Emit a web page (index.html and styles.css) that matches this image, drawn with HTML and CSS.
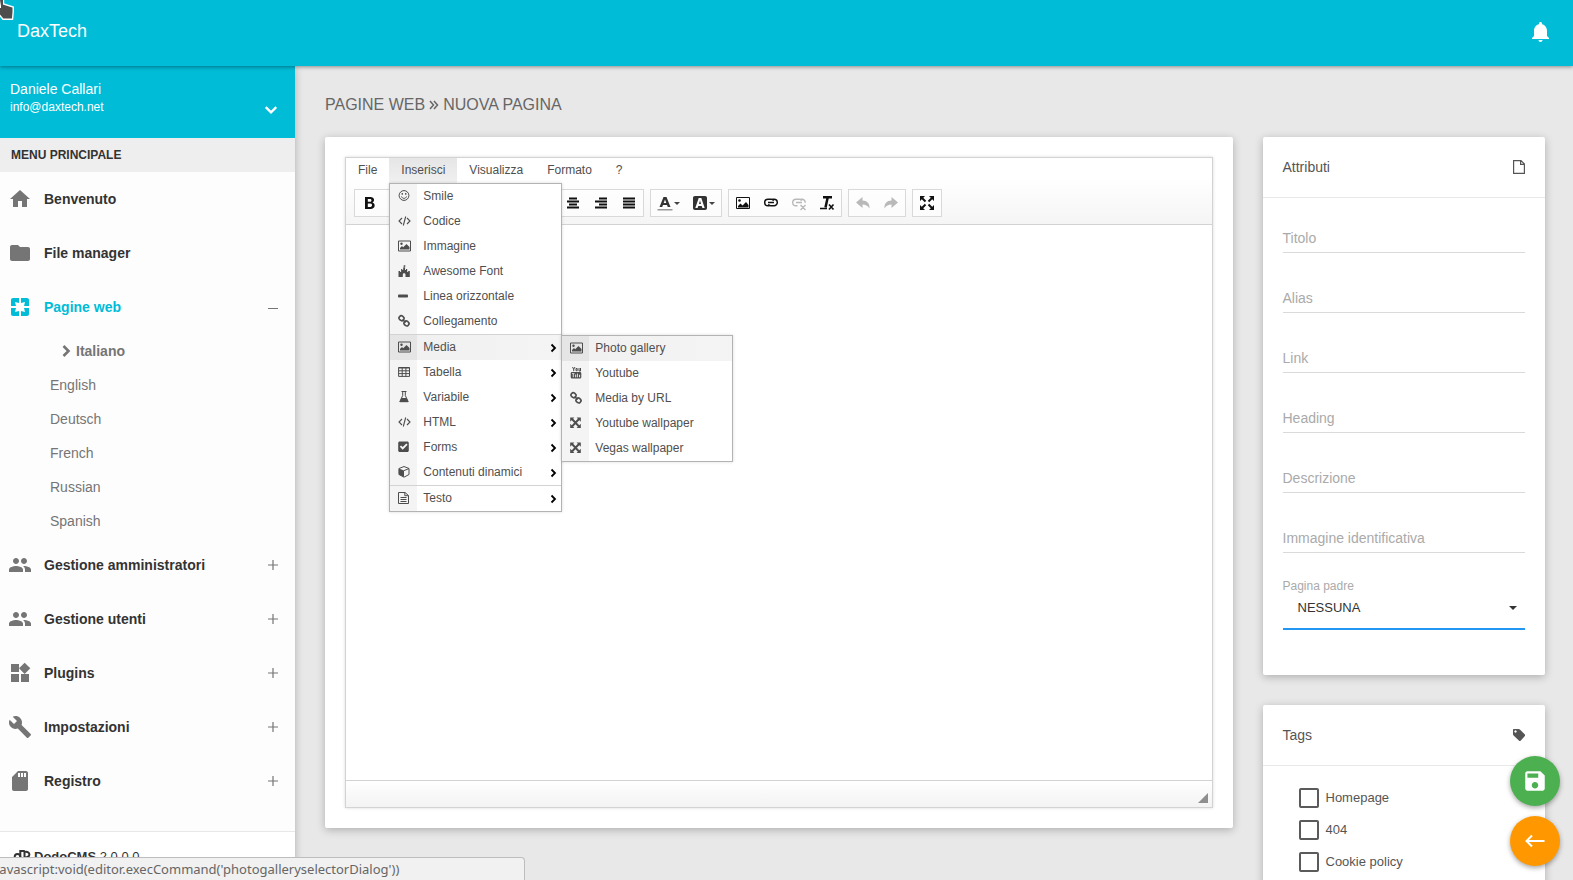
FILE: index.html
```html
<!DOCTYPE html>
<html lang="it">
<head>
<meta charset="utf-8">
<title>DaxTech</title>
<meta name="viewport" content="width=device-width, initial-scale=1">
<link rel="stylesheet" href="styles.css">
</head>
<body>
<svg class="sprite" aria-hidden="true">
  <symbol id="i-home" viewBox="0 0 24 24"><path d="M10 20v-6h4v6h5v-8h3L12 3 2 12h3v8z"/></symbol>
  <symbol id="i-folder" viewBox="0 0 24 24"><path d="M10 4H4c-1.1 0-2 .9-2 2v12c0 1.100.9 2 2 2h16c1.100 0 2-.9 2-2V8c0-1.100-.9-2-2-2h-8l-2-2z"/></symbol>
  <symbol id="i-pages" viewBox="0 0 24 24"><path d="M3 5v6h5L7 7l4 1V3H5c-1.100 0-2 .9-2 2zm5 8H3v6c0 1.100.9 2 2 2h6v-5l-4 1 1-4zm9 4l-4-1v5h6c1.100 0 2-.9 2-2v-6h-5l1 4zm2-14h-6v5l4-1-1 4h5V5c0-1.100-.9-2-2-2z"/></symbol>
  <symbol id="i-group" viewBox="0 0 24 24"><path d="M16 11c1.660 0 3-1.340 3-3s-1.340-3-3-3-3 1.340-3 3 1.340 3 3 3zm-8 0c1.660 0 3-1.340 3-3s-1.340-3-3-3-3 1.340-3 3 1.340 3 3 3zm0 2c-2.330 0-7 1.170-7 3.500V19h14v-2.500c0-2.330-4.670-3.500-7-3.500zm8 0c-.29 0-.62.020-.97.050 1.160.84 1.970 1.970 1.970 3.450V19h6v-2.500c0-2.330-4.670-3.500-7-3.500z"/></symbol>
  <symbol id="i-widgets" viewBox="0 0 24 24"><path d="M13 13v8h8v-8h-8zM3 21h8v-8H3v8zM3 3v8h8V3H3zm13.660-1.310L11 7.340 16.660 13l5.660-5.660-5.660-5.650z"/></symbol>
  <symbol id="i-build" viewBox="0 0 24 24"><path d="M22.700 19l-9.100-9.100c.9-2.300.4-5-1.500-6.900-2-2-5-2.400-7.400-1.300L9 6 6 9 1.600 4.700C.4 7.100.9 10.100 2.900 12.100c1.900 1.900 4.600 2.400 6.900 1.500l9.100 9.100c.4.4 1 .4 1.400 0l2.300-2.300c.5-.4.5-1.100.1-1.400z"/></symbol>
  <symbol id="i-sd" viewBox="0 0 24 24"><path d="M18 2h-8L4 8v12c0 1.100.9 2 2 2h12c1.100 0 2-.9 2-2V4c0-1.100-.9-2-2-2zm-6 6h-2V4h2v4zm3 0h-2V4h2v4zm3 0h-2V4h2v4z"/></symbol>
  <symbol id="i-bell" viewBox="0 0 24 24"><path d="M11.500 22c1.100 0 2-.9 2-2h-4c0 1.100.9 2 2 2zm6.500-6v-5.500c0-3.070-2.130-5.640-5-6.320V3.500c0-.83-.67-1.500-1.500-1.500S10 2.670 10 3.500v.68c-2.870.68-5 3.250-5 6.320V16l-2 2v1h17v-1l-2-2z"/></symbol>
  <symbol id="i-save" viewBox="0 0 24 24"><path d="M17 3H5c-1.110 0-2 .9-2 2v14c0 1.100.89 2 2 2h14c1.100 0 2-.9 2-2V7l-4-4zm-5 16c-1.660 0-3-1.340-3-3s1.340-3 3-3 3 1.340 3 3-1.340 3-3 3zm3-10H5V5h10v4z"/></symbol>
  <symbol id="i-back" viewBox="0 0 20 20"><path d="M19.500 10H2M7 4.500L1.500 10 7 15.500" fill="none" stroke="currentColor" stroke-width="2"/></symbol>
  <symbol id="i-plus" viewBox="0 0 10 10"><path d="M0 5h10M5 0v10" fill="none" stroke="currentColor" stroke-width="1.200"/></symbol>
  <symbol id="i-minus" viewBox="0 0 10 10"><path d="M0 6.500h10" fill="none" stroke="currentColor"/></symbol>
  <symbol id="i-down" viewBox="0 0 12 12"><path d="M1.500 3.500L6 8l4.500-4.500" fill="none" stroke="currentColor" stroke-width="2"/></symbol>
  <symbol id="i-right" viewBox="0 0 12 12"><path d="M3.500 1L8.500 6l-5 5" fill="none" stroke="currentColor" stroke-width="2.600"/></symbol>
  <symbol id="i-more" viewBox="0 0 10 10"><path d="M3.500 1.500L7 5 3.500 8.500" fill="none" stroke="currentColor" stroke-width="1.800"/></symbol>
  <symbol id="i-double" viewBox="0 0 10 10"><path d="M1 1l3.500 4L1 9M5 1l3.500 4L5 9" fill="none" stroke="currentColor" stroke-width="1.500"/></symbol>
  <symbol id="i-logo" viewBox="0 0 18 18"><g fill="none" stroke="currentColor" stroke-width="2"><circle cx="4.500" cy="9.800" r="2.800"/><path d="M7.300 14V4h4.500M11.500 4v12M11.500 5c6.500-1.500 6.500 6 0 5.500"/></g></symbol>
  <symbol id="i-page" viewBox="0 0 12 14"><path d="M.6.6h7.400L11.400 4v9.400H.6zM7.600.6v3.700h3.800" fill="none" stroke="currentColor" stroke-width="1.200"/></symbol>
  <symbol id="i-tag" viewBox="1 1 12 12"><path fill-rule="evenodd" d="M1 2c0-.6.4-1 1-1h4.500c.5 0 1 .3 1.400.6l5 5c.5.500.5 1 0 1.500L8.600 12.700c-.4.4-1 .4-1.500 0L1.600 7.600C1.200 7.200 1 6.800 1 6.200zM3.500 2.300a1.200 1.200 0 1 0 .01 0z"/></symbol>

  <symbol id="m-smile" viewBox="0 0 14 14"><circle cx="6" cy="6.500" r="4.900" fill="none" stroke="currentColor"/><path d="M3.500 7.500c.8 2.500 4.200 2.500 5 0" fill="none" stroke="currentColor"/><path d="M3.600 4h1.300v1.800H3.600zM7.100 4h1.300v1.800H7.100z"/></symbol>
  <symbol id="m-code" viewBox="0 0 14 14"><path d="M4 4L1 7l3 3M9 4l3 3-3 3M7.700 2.500l-2.400 9" fill="none" stroke="currentColor" stroke-width="1.100"/></symbol>
  <symbol id="m-image" viewBox="0 0 14 14"><path d="M.5 2h12v10H.5z" fill="none" stroke="currentColor"/><circle cx="3.500" cy="4.800" r="1.200"/><path d="M2 10.500V9l2-2 1.200 1.200L8.500 5 11.500 8v2.500z"/></symbol>
  <symbol id="m-castle" viewBox="0 0 14 14"><path d="M.5 13V7h1.600v1h1V5h1.200v1h.9V3.500h.5V1.300h1.600v1.500H6.500v.7h.6V6H8V5h1.200v3h1V7h1.600v6H7.500v-2.500c0-1.600-2.700-1.600-2.700 0V13z"/></symbol>
  <symbol id="m-line" viewBox="0 0 14 14"><rect x="0" y="5.500" width="10" height="3" rx=".8"/></symbol>
  <symbol id="m-link" viewBox="0 0 14 14"><g fill="none" stroke="currentColor" stroke-width="1.600"><rect x="1" y="2" width="5" height="4.400" rx="2" transform="rotate(40 3.500 4.200)"/><rect x="6" y="7.200" width="5" height="4.400" rx="2" transform="rotate(40 8.500 9.400)"/><path d="M4.500 5.500l3.200 3"/></g></symbol>
  <symbol id="m-table" viewBox="0 0 14 14"><path d="M.6 2.500h10.900v8.900H.6zM.6 3h11M.6 5.800h11M.6 8.600h11M4.200 2v9.500M7.900 2v9.500" fill="none" stroke="currentColor"/></symbol>
  <symbol id="m-flask" viewBox="0 0 14 14"><path d="M3.500 1.500h5M4.700 1.500v4L1.800 11.700h8.400L7.300 5.500v-4" fill="none" stroke="currentColor"/><path d="M3.400 8h5.200l1.800 4H1.600z"/></symbol>
  <symbol id="m-check" viewBox="0 0 14 14"><path fill-rule="evenodd" d="M1.700 1.500h7.600c.9 0 1.500.6 1.500 1.500v7.500c0 .9-.6 1.500-1.500 1.500H1.700C.8 12 .2 11.400.2 10.500V3c0-.9.6-1.500 1.500-1.500zM1.800 6.800L4.700 9.700l4.900-4.900-1.300-1.300-3.600 3.600L3.100 5.500z"/></symbol>
  <symbol id="m-cube" viewBox="0 0 14 14"><path d="M6 1.500l5 2v6l-5 2.700-5-2.700v-6z" fill="none" stroke="currentColor"/><path d="M.8 3.500L6 5.600V12L.8 9.500z"/><path d="M6 5.600l5-2" stroke="currentColor"/></symbol>
  <symbol id="m-text" viewBox="0 0 14 14"><path d="M.5 1.500H7l3.500 3v8H.5zM6.800 1.500v3.200h3.500M2.500 6.500h6M2.500 8.500h6M2.500 10.500h6" fill="none" stroke="currentColor"/></symbol>
  <symbol id="m-youtube" viewBox="0 0 14 14"><path fill="none" stroke="currentColor" d="M2.500 1l1.200 2.200L5 1M3.700 3v2.200M6 2.500v2.200h1.200V2.500zM9 2v3h1.500V2"/><path fill-rule="evenodd" d="M2 6h8c.8 0 1.300.6 1.300 1.300V11c0 .8-.5 1.500-1.300 1.500H2C1.200 12.500.7 11.800.7 11V7.300C.7 6.600 1.200 6 2 6zm0 1.200v.9h.8v3.200h.9V8.100h.8v-.9zm3.200 1.400v2.700h1V8.600zm1.900-1.200v3.900h.8V7.400zm2 1.300v2.500h1V8.700z"/></symbol>
  <symbol id="m-expand" viewBox="0 0 14 14"><path d="M2 3l7 7.500M9 3l-7 7.500" stroke="currentColor" stroke-width="1.900"/><path d="M.2 1.500h4.200L.2 5.700zM10.800 1.500v4.200L6.600 1.500zM.2 12V7.800L4.400 12zM10.800 12H6.600l4.200-4.200z"/></symbol>

  <symbol id="t-bold" viewBox="0 0 16 16"><path fill-rule="evenodd" d="M4 2h5.500c4.200 0 4.500 4.400 1.800 5.500 3.600.8 3.200 6.500-1.700 6.500H4zm2.800 2v2.800h2.400c1.700 0 1.700-2.800 0-2.800zm0 4.600V12h2.600c2.200 0 2.200-3.400 0-3.400z"/></symbol>
  <symbol id="t-italic" viewBox="0 0 16 16"><path d="M6 3h6M9 3L7 13M4 13h6" fill="none" stroke="currentColor" stroke-width="2"/></symbol>
  <symbol id="t-underline" viewBox="0 0 16 16"><path d="M4 2v5c0 5 8 5 8 0V2M3 14h10" fill="none" stroke="currentColor" stroke-width="2"/></symbol>
  <symbol id="t-list" viewBox="0 0 16 16"><path d="M6 4h8M6 8h8M6 12h8M2 4h2M2 8h2M2 12h2" stroke="currentColor" stroke-width="2"/></symbol>
  <symbol id="t-left" viewBox="0 0 16 16"><path d="M2 3.500h12M2 6.500h8M2 9.500h12M2 12.500h8" stroke="currentColor" stroke-width="1.600"/></symbol>
  <symbol id="t-center" viewBox="0 0 16 16"><path d="M4 3.500h8M2 6.500h12M4 9.500h8M2 12.500h12" stroke="currentColor" stroke-width="1.800"/></symbol>
  <symbol id="t-right" viewBox="0 0 16 16"><path d="M6 3.500h8M2 6.500h12M6 9.500h8M2 12.500h12" stroke="currentColor" stroke-width="1.800"/></symbol>
  <symbol id="t-justify" viewBox="0 0 16 16"><path d="M2 3.500h12M2 6.500h12M2 9.500h12M2 12.500h12" stroke="currentColor" stroke-width="1.800"/></symbol>
  <symbol id="t-color" viewBox="0 0 16 16"><path fill-rule="evenodd" d="M2.500 12L6.500 2h3l4 10h-2.700l-.8-2H6l-.8 2zM6.700 8h2.600L8 4.400z"/><path d="M.5 14h15v1.500H.5z" fill="#999"/></symbol>
  <symbol id="t-bg" viewBox="0 0 16 16"><path fill-rule="evenodd" d="M3 1h10c1.300 0 2 .7 2 2v10c0 1.300-.7 2-2 2H3c-1.300 0-2-.7-2-2V3c0-1.300.7-2 2-2zm.3 12h2.300l.7-2h3.400l.7 2h2.300L9.300 3H6.700zM7 9l1-3.500L9 9z"/></symbol>
  <symbol id="t-image" viewBox="0 0 16 16"><path d="M1.500 2.500h13v11h-13z" fill="none" stroke="currentColor"/><circle cx="4.500" cy="5.500" r="1.300"/><path d="M3 12.500V11l2.500-2.500 2 2L11 7l2.500 3v2.500z"/></symbol>
  <symbol id="t-link" viewBox="0 0 16 16"><g fill="none" stroke="currentColor" stroke-width="1.500"><path d="M6.500 10.800H5a3.300 3.300 0 0 1 0-6.600h3.300c1.200 0 2 .7 2.300 1.500M9.500 4.200H11a3.300 3.300 0 0 1 0 6.600H7.700c-1.200 0-2-.7-2.300-1.500"/><path d="M5 7.500h6"/></g></symbol>
  <symbol id="t-unlink" viewBox="0 0 16 16"><g fill="none" stroke="currentColor" stroke-width="1.400"><path d="M6.500 10.800H5a3.300 3.300 0 0 1 0-6.600h3.300c1.200 0 2 .7 2.300 1.500M9.500 4.200H11a3.300 3.300 0 0 1 3.200 3.500M5 7.500h6M9.500 10l5 5M14.500 10l-5 5"/></g></symbol>
  <symbol id="t-clear" viewBox="0 0 16 16"><path d="M4 2.200h9M8.800 2L6.500 12.500" fill="none" stroke="currentColor" stroke-width="2.500"/><path d="M1 13.500h7M10 9.500l4.500 5M14.500 9.500l-4.500 5" fill="none" stroke="currentColor" stroke-width="1.600"/></symbol>
  <symbol id="t-undo" viewBox="0 0 16 16"><path d="M1 7.500L7.500 2v3.500c4.500 0 7.500 3 7 8-1.800-3-4-4-7-4V13z"/></symbol>
  <symbol id="t-redo" viewBox="0 0 16 16"><path d="M15 7.500L8.500 2v3.500c-4.500 0-7.500 3-7 8 1.800-3 4-4 7-4V13z"/></symbol>
  <symbol id="t-max" viewBox="0 0 16 16"><path d="M2.500 2.500l4 4M13.500 2.500l-4 4M2.500 13.500l4-4M13.500 13.500l-4-4" stroke="currentColor" stroke-width="2"/><path d="M1 1h5L1 6zM15 1v5l-5-5zM1 15v-5l5 5zM15 15h-5l5-5z"/></symbol>
</svg>

<header class="topbar">
  <a class="brand" href="#">DaxTech</a>
  <button class="bell" type="button" aria-label="Notifiche"><svg class="icon24"><use href="#i-bell"/></svg></button>
</header>

<div class="shell">
  <aside class="sidebar">
    <div class="profile">
      <div class="who"><span class="name">Daniele Callari</span><span class="mail">info@daxtech.net</span></div>
      <button class="profile-toggle" type="button" aria-label="Profilo"><svg class="icon14"><use href="#i-down"/></svg></button>
    </div>
    <h2 class="menu-title">MENU PRINCIPALE</h2>
    <nav class="nav">
      <a class="nav-item" href="#"><svg class="icon24"><use href="#i-home"/></svg><span>Benvenuto</span></a>
      <a class="nav-item" href="#"><svg class="icon24"><use href="#i-folder"/></svg><span>File manager</span></a>
      <a class="nav-item active" href="#"><svg class="icon24"><use href="#i-pages"/></svg><span>Pagine web</span><svg class="toggle"><use href="#i-minus"/></svg></a>
      <div class="subnav">
        <a class="current" href="#"><svg class="icon12"><use href="#i-right"/></svg>Italiano</a>
        <a href="#">English</a>
        <a href="#">Deutsch</a>
        <a href="#">French</a>
        <a href="#">Russian</a>
        <a href="#">Spanish</a>
      </div>
      <a class="nav-item" href="#"><svg class="icon24"><use href="#i-group"/></svg><span>Gestione amministratori</span><svg class="toggle"><use href="#i-plus"/></svg></a>
      <a class="nav-item" href="#"><svg class="icon24"><use href="#i-group"/></svg><span>Gestione utenti</span><svg class="toggle"><use href="#i-plus"/></svg></a>
      <a class="nav-item" href="#"><svg class="icon24"><use href="#i-widgets"/></svg><span>Plugins</span><svg class="toggle"><use href="#i-plus"/></svg></a>
      <a class="nav-item" href="#"><svg class="icon24"><use href="#i-build"/></svg><span>Impostazioni</span><svg class="toggle"><use href="#i-plus"/></svg></a>
      <a class="nav-item" href="#"><svg class="icon24"><use href="#i-sd"/></svg><span>Registro</span><svg class="toggle"><use href="#i-plus"/></svg></a>
    </nav>
    <footer class="side-foot"><svg class="logo"><use href="#i-logo"/></svg><span><b>DodoCMS</b> 2.0.0.0</span></footer>
  </aside>

  <main class="content">
    <h1 class="page-title">PAGINE WEB <svg class="sep"><use href="#i-double"/></svg> NUOVA PAGINA</h1>
    <div class="grid">
      <section class="card editor-card">
        <div class="editor">
          <div class="editor-top">
            <div class="menubar">
              <button type="button">File</button>
              <div class="menu-anchor">
                <button class="open" type="button">Inserisci</button>
                <div class="menu">
                  <button type="button"><svg><use href="#m-smile"/></svg><span>Smile</span></button>
                  <button type="button"><svg><use href="#m-code"/></svg><span>Codice</span></button>
                  <button type="button"><svg><use href="#m-image"/></svg><span>Immagine</span></button>
                  <button type="button"><svg><use href="#m-castle"/></svg><span>Awesome Font</span></button>
                  <button type="button"><svg><use href="#m-line"/></svg><span>Linea orizzontale</span></button>
                  <button type="button"><svg><use href="#m-link"/></svg><span>Collegamento</span></button>
                  <div class="menu-anchor divided">
                    <button class="hover" type="button"><svg><use href="#m-image"/></svg><span>Media</span><svg class="more"><use href="#i-more"/></svg></button>
                    <div class="menu submenu">
                      <button class="hover" type="button"><svg><use href="#m-image"/></svg><span>Photo gallery</span></button>
                      <button type="button"><svg><use href="#m-youtube"/></svg><span>Youtube</span></button>
                      <button type="button"><svg><use href="#m-link"/></svg><span>Media by URL</span></button>
                      <button type="button"><svg><use href="#m-expand"/></svg><span>Youtube wallpaper</span></button>
                      <button type="button"><svg><use href="#m-expand"/></svg><span>Vegas wallpaper</span></button>
                    </div>
                  </div>
                  <button type="button"><svg><use href="#m-table"/></svg><span>Tabella</span><svg class="more"><use href="#i-more"/></svg></button>
                  <button type="button"><svg><use href="#m-flask"/></svg><span>Variabile</span><svg class="more"><use href="#i-more"/></svg></button>
                  <button type="button"><svg><use href="#m-code"/></svg><span>HTML</span><svg class="more"><use href="#i-more"/></svg></button>
                  <button type="button"><svg><use href="#m-check"/></svg><span>Forms</span><svg class="more"><use href="#i-more"/></svg></button>
                  <button type="button"><svg><use href="#m-cube"/></svg><span>Contenuti dinamici</span><svg class="more"><use href="#i-more"/></svg></button>
                  <div class="divided">
                    <button type="button"><svg><use href="#m-text"/></svg><span>Testo</span><svg class="more"><use href="#i-more"/></svg></button>
                  </div>
                </div>
              </div>
              <button type="button">Visualizza</button>
              <button type="button">Formato</button>
              <button type="button">?</button>
            </div>
            <div class="toolbar">
              <div class="group">
                <button type="button" aria-label="Grassetto"><svg><use href="#t-bold"/></svg></button>
                <button type="button" aria-label="Corsivo"><svg><use href="#t-italic"/></svg></button>
                <button type="button" aria-label="Sottolineato"><svg><use href="#t-underline"/></svg></button>
                <button type="button" aria-label="Elenco"><svg><use href="#t-list"/></svg></button>
                <button type="button" aria-label="Elenco numerato"><svg><use href="#t-list"/></svg></button>
                <button type="button" aria-label="Rientro"><svg><use href="#t-list"/></svg></button>
              </div>
              <div class="group">
                <button type="button" aria-label="Sinistra"><svg><use href="#t-left"/></svg></button>
                <button type="button" aria-label="Centra"><svg><use href="#t-center"/></svg></button>
                <button type="button" aria-label="Destra"><svg><use href="#t-right"/></svg></button>
                <button type="button" aria-label="Giustifica"><svg><use href="#t-justify"/></svg></button>
              </div>
              <div class="group">
                <button class="split" type="button" aria-label="Colore testo"><svg><use href="#t-color"/></svg><i class="caret"></i></button>
                <button class="split" type="button" aria-label="Colore sfondo"><svg><use href="#t-bg"/></svg><i class="caret"></i></button>
              </div>
              <div class="group">
                <button type="button" aria-label="Immagine"><svg><use href="#t-image"/></svg></button>
                <button type="button" aria-label="Collegamento"><svg><use href="#t-link"/></svg></button>
                <button type="button" aria-label="Rimuovi collegamento" disabled><svg><use href="#t-unlink"/></svg></button>
                <button type="button" aria-label="Rimuovi formato"><svg><use href="#t-clear"/></svg></button>
              </div>
              <div class="group">
                <button type="button" aria-label="Annulla" disabled><svg><use href="#t-undo"/></svg></button>
                <button type="button" aria-label="Ripristina" disabled><svg><use href="#t-redo"/></svg></button>
              </div>
              <div class="group">
                <button type="button" aria-label="Massimizza"><svg><use href="#t-max"/></svg></button>
              </div>
            </div>
          </div>
          <div class="editor-body" contenteditable="true" role="textbox" aria-label="Contenuto"></div>
          <div class="editor-foot"><i class="grip"></i></div>
        </div>
      </section>

      <div class="side">
        <section class="card">
          <div class="card-head"><h2>Attributi</h2><svg class="page-icon"><use href="#i-page"/></svg></div>
          <form class="fields">
            <div class="field"><label for="f1">Titolo</label><input id="f1" type="text"></div>
            <div class="field"><label for="f2">Alias</label><input id="f2" type="text"></div>
            <div class="field"><label for="f3">Link</label><input id="f3" type="text"></div>
            <div class="field"><label for="f4">Heading</label><input id="f4" type="text"></div>
            <div class="field"><label for="f5">Descrizione</label><input id="f5" type="text"></div>
            <div class="field"><label for="f6">Immagine identificativa</label><input id="f6" type="text"></div>
            <div class="pick">
              <label for="parent">Pagina padre</label>
              <div class="select"><select id="parent"><option>NESSUNA</option></select><i class="caret"></i></div>
            </div>
          </form>
        </section>
        <section class="card">
          <div class="card-head"><h2>Tags</h2><svg class="icon12"><use href="#i-tag"/></svg></div>
          <div class="tags">
            <label><input type="checkbox">Homepage</label>
            <label><input type="checkbox">404</label>
            <label><input type="checkbox">Cookie policy</label>
          </div>
        </section>
      </div>
    </div>
  </main>
</div>

<div class="fabs">
  <button class="fab save" type="button" aria-label="Salva"><svg><use href="#i-save"/></svg></button>
  <button class="fab back" type="button" aria-label="Indietro"><svg><use href="#i-back"/></svg></button>
</div>
<div class="status">javascript:void(editor.execCommand('photogalleryselectorDialog'))</div>
<svg class="pointer" viewBox="0 0 14 20" aria-hidden="true"><path d="M-2 0H3.500V4l9.700 3v5l-.7 7.300H3L-2 13z" fill="#4d4d4d" stroke="#fff" stroke-width="1.400"/><path d="M-2 0H1v8h-3z" fill="#fff"/><path d="M0 0h3v6H1z" fill="#4d4d4d"/></svg>
</body>
</html>
```
FILE: styles.css
```css
* { box-sizing: border-box; }

body {
  margin: 0;
  height: 100vh;
  display: flex;
  flex-direction: column;
  overflow: hidden;
  background: #e8e8e8;
  color: #555;
  font: 14px/20px "Liberation Sans", Arial, sans-serif;
}

h1, h2 { margin: 0; font-weight: normal; }
a { color: inherit; text-decoration: none; }
svg { display: block; flex: none; fill: currentColor; }
button { border: 0; padding: 0; margin: 0; background: none; color: inherit; font: inherit; cursor: pointer; }
.sprite { position: absolute; width: 0; height: 0; }
.icon24 { width: 24px; height: 24px; }
.icon14 { width: 14px; height: 14px; }
.icon12 { width: 12px; height: 12px; }
.page-icon { width: 12px; height: 14px; }

/* Top bar */
.topbar {
  position: relative;
  z-index: 2;
  flex: none;
  display: flex;
  align-items: center;
  justify-content: space-between;
  height: 66px;
  padding: 0 20px 2px 17px;
  background: #00bcd7;
  color: #fff;
  box-shadow: 0 1px 4px rgba(0, 0, 0, .4);
}
.brand { font-size: 18px; padding-bottom: 2px; }

.shell { flex: 1; display: flex; min-height: 0; }

/* Sidebar */
.sidebar {
  position: relative;
  flex: none;
  display: flex;
  flex-direction: column;
  width: 295px;
  background: #fdfdfd;
  box-shadow: 0 2px 8px rgba(0, 0, 0, .25);
}
.profile {
  display: flex;
  justify-content: space-between;
  height: 72px;
  padding: 14px 17px 0 10px;
  background: #00bcd7;
  color: #fff;
}
.who { display: flex; flex-direction: column; }
.name { line-height: 18px; }
.mail { font-size: 12px; line-height: 18px; }
.profile-toggle { align-self: center; padding-top: 2px; }
.menu-title {
  padding: 0 11px;
  background: #eee;
  color: #333;
  font-size: 12px;
  font-weight: bold;
  line-height: 34px;
}
.nav { flex: 1; color: #333; }
.nav-item {
  display: flex;
  align-items: center;
  gap: 12px;
  height: 54px;
  padding: 0 17px 0 8px;
  font-weight: bold;
}
.nav-item .icon24 { color: #757575; }
.nav-item.active, .nav-item.active .icon24 { color: #00bcd7; }
.toggle { width: 10px; height: 10px; margin-left: auto; color: #757575; }
.subnav { color: #757575; }
.subnav a { display: flex; align-items: center; height: 34px; padding-left: 50px; }
.subnav .current { gap: 4px; padding-left: 60px; font-weight: bold; }
.side-foot {
  display: flex;
  gap: 3px;
  height: 49px;
  padding: 15px 13px 0;
  border-top: 1px solid #e8e8e8;
  color: #333;
  background: #fff;
  font-size: 13px;
}
.logo { width: 18px; height: 18px; }

/* Content */
.content { flex: 1; min-width: 0; padding: 29px 28px 0 30px; }
.page-title { display: flex; align-items: center; gap: 4px; margin-bottom: 22px; color: #666; font-size: 16px; }
.sep { width: 10px; height: 10px; }
.grid { display: grid; grid-template-columns: repeat(12, minmax(0, 1fr)); column-gap: 30px; align-items: start; }
.editor-card { grid-column: span 9; padding: 20px; }
.side { grid-column: span 3; display: grid; gap: 30px; }
.card { background: #fff; border-radius: 2px; box-shadow: 0 2px 8px rgba(0, 0, 0, .25); }

/* Editor */
.editor { border: 1px solid #d3d3d3; box-shadow: 0 0 3px rgba(0, 0, 0, .15); font-size: 12px; color: #4f4f4f; }
.editor-top { border-bottom: 1px solid #d3d3d3; background: linear-gradient(#fff, #fff 30%, #f5f5f5); }
.menubar { display: flex; height: 25px; }
.menubar > button, .open { height: 25px; padding: 0 12px 2px; }
.open { background: linear-gradient(#e6e6e6, #f0f0f0); }
.menu-anchor { position: relative; }
.menu {
  position: absolute;
  z-index: 1;
  top: 100%;
  left: 0;
  width: 173px;
  border: 1px solid #b3b3b3;
  background: #fff;
  box-shadow: 0 0 3px rgba(0, 0, 0, .15);
}
.menu button {
  display: flex;
  align-items: center;
  gap: 11px;
  width: 100%;
  height: 25px;
  padding: 0 3px 2px 8px;
  background: linear-gradient(90deg, #f4f4f4 27px, transparent 27px);
  text-align: left;
}
.menu button.hover { background: linear-gradient(90deg, #e5e5e5 27px, #f1f1f1 27px, #f4f4f4); }
.menu svg { width: 14px; height: 14px; color: #4d4d4d; }
.menu .more { width: 10px; height: 10px; margin: 3px 0 0 auto; color: #000; }
.divided { border-top: 1px solid #d3d3d3; }
.submenu { top: 0; left: 100%; width: 172px; }
.toolbar { display: flex; gap: 6px; padding: 6px 8px 7px; }
.group { display: flex; border: 1px solid #d9d9d9; background: rgba(255, 255, 255, .6); }
.group button { display: flex; align-items: center; justify-content: center; width: 28px; height: 26px; color: #111; }
.group button:disabled { color: #b9b9b9; }
.group svg { width: 16px; height: 16px; }
.group .split { width: 35px; gap: 1px; color: #444; }
.group .split svg { color: #333; }
.caret { border: 4px solid transparent; border-top-color: currentColor; border-bottom: 0; }
.split .caret { border-width: 3px 3px 0; }
.editor-body { min-height: 555px; outline: 0; }
.editor-foot {
  display: flex;
  align-items: flex-end;
  justify-content: flex-end;
  height: 27px;
  padding: 4px;
  border-top: 1px solid #d3d3d3;
  background: linear-gradient(#fff, #f3f3f3);
}
.grip { border-left: 10px solid transparent; border-bottom: 10px solid #8e8e8e; }

/* Side cards */
.card-head {
  display: flex;
  align-items: center;
  justify-content: space-between;
  height: 61px;
  padding: 0 20px;
  border-bottom: 1px solid #e8e8e8;
}
.card-head h2 { font-size: 14px; }
.fields { display: flex; flex-direction: column; gap: 32px; padding: 27px 20px 45px; }
.field { display: grid; height: 28px; border-bottom: 1px solid #dadada; }
.field > * { grid-area: 1 / 1; }
.field label { padding-top: 3px; color: #aaa; pointer-events: none; }
.field input { width: 100%; border: 0; outline: 0; background: none; font: inherit; }
.pick { display: flex; flex-direction: column; margin-top: -8px; }
.pick label { color: #aaa; font-size: 12px; line-height: 18px; }
.select { display: grid; align-items: center; border-bottom: 2px solid #2196f3; padding-bottom: 7px; }
.select > * { grid-area: 1 / 1; }
.select select {
  height: 26px;
  width: 100%;
  padding: 0 15px;
  border: 0;
  outline: 0;
  appearance: none;
  background: none;
  color: #333;
  font: 13px/20px "Liberation Sans", Arial, sans-serif;
}
.select .caret { justify-self: end; margin-right: 8px; color: #333; pointer-events: none; }
.tags { display: flex; flex-direction: column; gap: 12px; padding: 22px 36px; font-size: 13px; }
.tags label { display: flex; align-items: center; gap: 7px; }
.tags input { appearance: none; width: 20px; height: 20px; margin: 0; border: 2px solid #5a5a5a; border-radius: 2px; }

/* Overlays */
.fabs { position: fixed; z-index: 3; right: 13px; bottom: 14px; display: grid; gap: 10px; }
.fab {
  display: grid;
  place-items: center;
  width: 50px;
  height: 50px;
  border-radius: 50%;
  color: #fff;
  box-shadow: 0 2px 5px rgba(0, 0, 0, .35);
}
.fab svg { width: 26px; height: 26px; }
.fab.back svg { width: 20px; height: 20px; }
.save { background: #4caf50; }
.back { background: #ff9800; }
.status {
  position: fixed;
  z-index: 4;
  left: 0;
  bottom: 0;
  width: 525px;
  height: 23px;
  overflow: hidden;
  border: 1px solid #bdbdbd;
  border-width: 1px 1px 0 0;
  border-radius: 0 4px 0 0;
  background: #f1f1f1;
  color: #666;
  font: 13px/22px "Noto Sans", sans-serif;
  text-indent: -4px;
}
.pointer { position: fixed; z-index: 5; left: 0; top: 0; width: 14px; height: 20px; }
```
